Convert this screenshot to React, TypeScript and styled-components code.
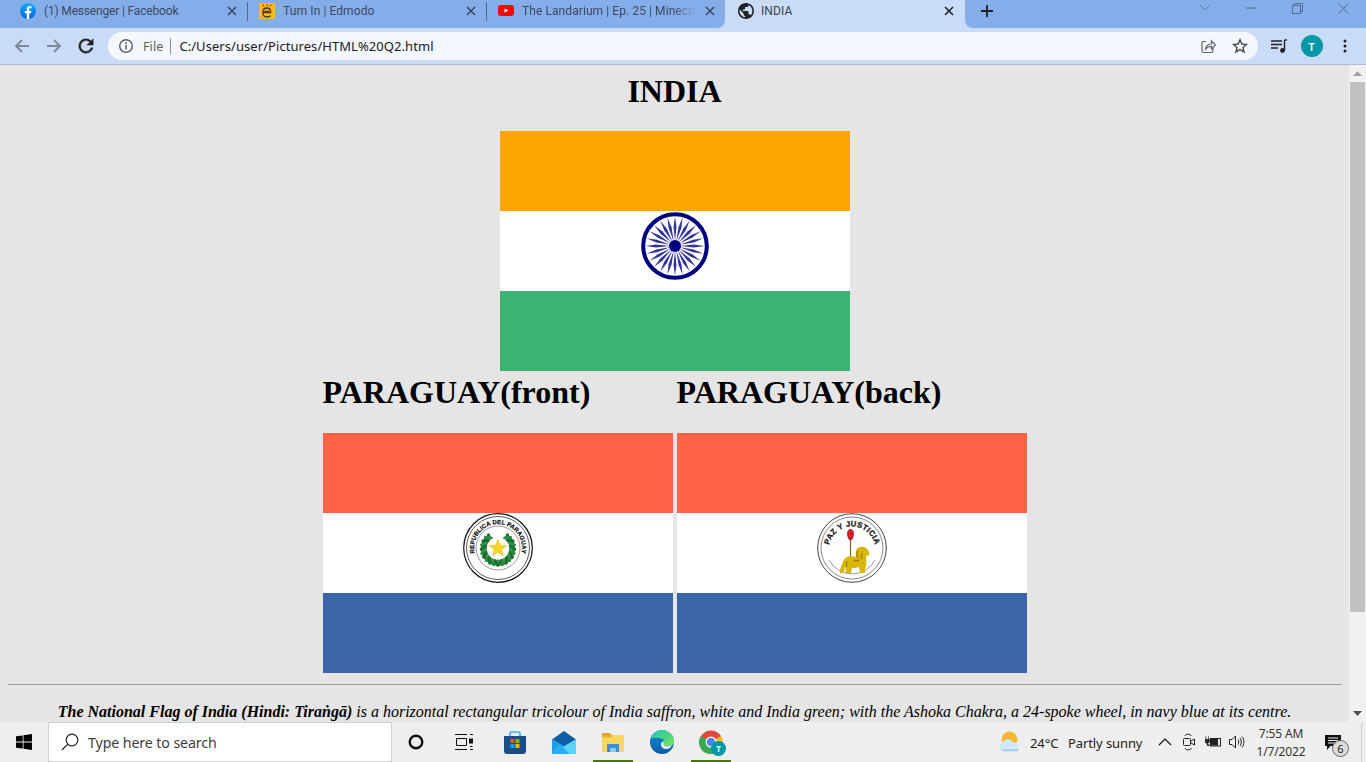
import React from "react";
import styled, { createGlobalStyle } from "styled-components";

const Global = createGlobalStyle`
  html, body { margin: 0; padding: 0; height: 100%; overflow: hidden; }
  #root { height: 100%; }
  * { box-sizing: border-box; }
`;

const UI = `"Noto Sans", "Open Sans", sans-serif`;
const SERIF = `"Liberation Serif", "Times New Roman", serif`;

const Screen = styled.div`
  width: 1366px; height: 762px; display: flex; flex-direction: column; overflow: hidden;
  font-family: ${UI};
`;

/* ---------- browser chrome ---------- */
const TabStrip = styled.div`
  height: 28px; display: flex; background: #c9dbf6; flex: none;
`;
const InactiveTabs = styled.div`
  width: 725px; padding-left: 8px; display: flex; background: #85ade9;
  border-bottom-right-radius: 8px;
`;
const Tab = styled.div<{ $active?: boolean; $sep?: boolean }>`
  width: ${p => (p.$active ? 240 : 239)}px; height: 22px; display: flex; align-items: center;
  padding-left: ${p => (p.$active ? 13 : 12)}px; gap: ${p => (p.$active ? 7 : 8)}px; position: relative; flex: none;
  &::after {
    content: ""; display: ${p => (p.$sep ? "block" : "none")};
    position: absolute; right: -1px; top: 2px; height: 19px; width: 1px; background: #4f6a92;
  }
`;
const TabTitle = styled.span<{ $fade?: boolean; $active?: boolean; $tight?: boolean }>`
  width: ${p => (p.$active ? 181 : 180)}px; font-family: Roboto, sans-serif; font-size: 12px; white-space: nowrap; overflow: hidden;
  letter-spacing: ${p => (p.$tight ? "-0.17px" : "0.08px")}; padding-bottom: 1px;
  color: ${p => (p.$active ? "#3a4150" : "#3c4a60")};
  ${p => p.$fade && "-webkit-mask-image: linear-gradient(to right, #000 84%, transparent 97%);"}
`;
const TabClose = styled.span`
  width: 12px; height: 12px; display: flex; align-items: center; justify-content: center; flex: none; margin-left: -6px;
`;
const RestStrip = styled.div`
  flex: 1; background: #85ade9; border-bottom-left-radius: 8px; display: flex; padding-left: 15px;
`;
const NewTab = styled.span`
  width: 14px; height: 22px; display: flex; align-items: center;
`;
const WindowControls = styled.div`
  margin-left: auto; display: flex; height: 16px;
`;
const WinBtn = styled.span`
  width: 46px; height: 16px; display: flex; align-items: center; justify-content: center;
`;
const Toolbar = styled.div`
  height: 37px; background: #c9dbf6; border-bottom: 1px solid #a9bbd8; display: flex; align-items: flex-start;
  padding: 4px 0 0 6px; flex: none;
`;
const ToolBtn = styled.span<{ $w?: number }>`
  width: ${p => p.$w ?? 32}px; height: 28px; display: flex; align-items: center; justify-content: center; flex: none;
`;
const Omnibox = styled.div`
  width: 1150px; height: 28px; margin: 0 4px 0 6px; border-radius: 14px; background: #f4f7fd;
  display: flex; align-items: center; padding: 0 2px 0 10px; flex: none;
`;
const FileLabel = styled.span`
  font-size: 12.5px; color: #5f6368; margin-left: 9px; letter-spacing: 0.1px;
`;
const OmniSep = styled.span`
  width: 1px; height: 16px; background: #8d9299; margin: 0 8px 0 7px;
`;
const Url = styled.span`
  font-size: 13px; color: #202124; letter-spacing: 0.06px; flex: 1;
`;
const Avatar = styled.span`
  width: 22px; height: 22px; border-radius: 50%; background: #0097a7; color: #e8f6f7;
  font-size: 11.5px; font-weight: 600; display: flex; align-items: center; justify-content: center;
`;

/* ---------- page ---------- */
const Viewport = styled.div`
  flex: 1; min-height: 0; display: flex;
`;
const Page = styled.main`
  flex: 1; min-width: 0; background: #e5e5e5; padding: 8px 8px 0; overflow: hidden;
  font-family: ${SERIF}; color: #000;
`;
const Title = styled.h1`
  margin: 0 0 21px; font-size: 32px; line-height: 37px; font-weight: 700; text-align: center;
`;
const CenterFlag = styled.div`
  display: flex; justify-content: center;
`;
const Flag = styled.div`
  width: 350px; height: 240px; display: grid; grid-template-rows: repeat(3, 80px);
`;
const Stripe = styled.div<{ $color: string }>`
  background: ${p => p.$color}; display: flex; justify-content: center; align-items: center; padding-bottom: 10px;
`;
const PairGrid = styled.div`
  width: 704px; margin: 3px auto 0; display: grid; grid-template-columns: 350px 350px; column-gap: 4px;
`;
const PairHeading = styled.h1`
  margin: 0 0 22px; font-size: 32px; line-height: 37px; font-weight: 700; white-space: nowrap;
`;
const Rule = styled.hr`
  margin: 11px -1px 0 0; border: 0; height: 1px; background: #9e9e9e;
`;
const Para = styled.p`
  margin: 18px 0 0; font-size: 16px; line-height: 18px; font-style: italic; text-align: center; white-space: nowrap;
`;
const Scrollbar = styled.div`
  width: 17px; flex: none; background: #f1f1f1; display: flex; flex-direction: column; align-items: center;
`;
const ScrollArrow = styled.span`
  height: 17px; display: flex; align-items: center; justify-content: center; flex: none;
`;
const ScrollThumb = styled.div`
  width: 15px; height: 530px; background: #c1c1c1; flex: none;
`;
const ScrollTrack = styled.div`
  flex: 1;
`;

/* ---------- taskbar ---------- */
const Taskbar = styled.footer`
  height: 40px; background: #eeeeee; display: flex; flex: none; align-items: stretch;
`;
const StartBtn = styled.span`
  width: 48px; display: flex; align-items: center; justify-content: center; flex: none;
`;
const SearchBox = styled.div`
  width: 344px; background: #fff; border: 1px solid #cfcfcf; display: flex; align-items: center; padding-left: 12px; gap: 9px; flex: none;
`;
const SearchText = styled.span`
  font-size: 14.2px; color: #3d3d3d; letter-spacing: -0.1px;
`;
const TaskBtn = styled.span<{ $w?: number; $open?: boolean }>`
  width: ${p => p.$w ?? 49}px; display: flex; align-items: center; justify-content: center; position: relative; flex: none;
  &::after {
    content: ""; display: ${p => (p.$open ? "block" : "none")};
    position: absolute; bottom: 0; left: 5px; right: 4px; height: 2px; background: #427a0d;
  }
`;
const TaskApps = styled.div`
  display: flex; margin-left: 2px;
`;
const Tray = styled.div`
  margin-left: auto; width: 369px; display: flex; align-items: center; font-size: 13px; color: #222; flex: none;
`;
const WeatherIcon = styled.span`
  width: 22px; height: 22px; margin: 0 9px 0 2px; flex: none;
`;
const TrayText = styled.span<{ $w: number }>`
  width: ${p => p.$w}px; white-space: nowrap; letter-spacing: -0.1px; flex: none; padding-top: 1px;
`;
const TrayIcon = styled.span`
  width: 24px; height: 40px; display: flex; align-items: center; justify-content: center; flex: none;
`;
const Clock = styled.div`
  width: 64px; display: flex; flex-direction: column; align-items: center; gap: 1px; font-size: 12px; line-height: 17px; color: #333; letter-spacing: -0.15px; flex: none;
`;
const Notify = styled.span`
  width: 40px; height: 40px; display: flex; align-items: center; justify-content: center; position: relative; flex: none;
`;
const NotifyBadge = styled.span`
  position: absolute; left: 19px; top: 18px; width: 17px; height: 17px; border-radius: 50%;
  background: #dcdcdc; border: 1px solid #666; font-size: 11px; line-height: 15px; text-align: center; color: #222;
`;
const ShowDesktop = styled.span`
  width: 1px; height: 40px; background: #d4d4d4; margin-left: 8px; flex: none;
`;
const ChromeBadge = styled.span`
  position: absolute; left: 25px; top: 19px; width: 15px; height: 15px; border-radius: 50%;
  background: #0097a7; color: #dff; font-size: 8px; font-weight: 700; line-height: 15px; text-align: center;
`;

/* ---------- drawings ---------- */
const Close = ({ c = "#3c4a60" }: { c?: string }) => (
  <svg width="10" height="10" viewBox="0 0 10 10"><path d="M1 1l8 8M9 1l-8 8" stroke={c} strokeWidth="1.6" /></svg>
);
const FbIcon = () => (
  <svg width="16" height="16" viewBox="0 0 16 16" style={{ flex: "none" }}>
    <defs><linearGradient id="fb" x1="0" y1="0" x2="0" y2="1"><stop offset="0" stopColor="#18acfe" /><stop offset="1" stopColor="#0163e0" /></linearGradient></defs>
    <circle cx="8" cy="8" r="8" fill="url(#fb)" />
    <path d="M11 10.200l.4-2.300H9.200V6.400c0-.7.3-1.200 1.200-1.200h1.100V3.200C11.100 3.100 10.500 3 9.900 3 8 3 6.800 4.100 6.800 6.100v1.800H4.800v2.300h2v5.700c.8.200 1.600.200 2.400 0v-5.700z" fill="#fff" />
  </svg>
);
const EdmodoIcon = () => (
  <svg width="16" height="16" viewBox="0 0 16 16" style={{ flex: "none" }}>
    <rect width="16" height="16" fill="#fbb81d" />
    <path d="M4 1.500l1 2M8 1v2M12 1.500l-1 2" stroke="#5a4410" strokeWidth="1" />
    <path d="M4 9.500h7.700c0-3-1.500-4.500-3.800-4.500S3.900 6.800 3.900 9.500s1.600 4.500 4 4.500c1.600 0 2.800-.5 3.500-1.300M5.500 8.300h4.500" fill="none" stroke="#4a3a10" strokeWidth="1.300" />
  </svg>
);
const YtIcon = () => (
  <svg width="16" height="16" viewBox="0 0 16 16" style={{ flex: "none" }}>
    <rect y="2" width="16" height="11" rx="3" fill="#f00" />
    <path d="M6.500 5.500l4 2-4 2z" fill="#fff" />
  </svg>
);
const Globe = () => (
  <svg width="16" height="16" viewBox="2 2 20 20" style={{ flex: "none" }}>
    <path fill="#202124" d="M12 2C6.480 2 2 6.480 2 12s4.480 10 10 10 10-4.480 10-10S17.520 2 12 2zm-1 17.930c-3.950-.490-7-3.850-7-7.930 0-.620.080-1.210.210-1.790L9 15v1c0 1.100.9 2 2 2v1.930zm6.900-2.540c-.260-.810-1-1.390-1.900-1.390h-1v-3c0-.550-.450-1-1-1H8v-2h2c.550 0 1-.450 1-1V7h2c1.100 0 2-.9 2-2v-.410c2.930 1.190 5 4.060 5 7.410 0 2.080-.8 3.970-2.100 5.390z" />
  </svg>
);
const Arrow = ({ flip }: { flip?: boolean }) => (
  <svg width="16" height="16" viewBox="0 0 16 16" style={flip ? { transform: "scaleX(-1)" } : undefined}>
    <path d="M15 8H2M8 2L2 8l6 6" fill="none" stroke="#7d8897" strokeWidth="1.900" />
  </svg>
);
const Reload = () => (
  <svg width="18" height="18" viewBox="2 2 20 20">
    <path fill="#202124" stroke="#202124" strokeWidth=".5" d="M17.650 6.350A7.958 7.958 0 0 0 12 4c-4.420 0-7.990 3.580-7.990 8s3.570 8 7.990 8c3.730 0 6.840-2.550 7.730-6h-2.080A5.990 5.990 0 0 1 12 18c-3.310 0-6-2.690-6-6s2.690-6 6-6c1.660 0 3.140.690 4.220 1.780L13 11h7V4l-2.350 2.350z" />
  </svg>
);
const Info = () => (
  <svg width="16" height="16" viewBox="0 0 16 16">
    <circle cx="8" cy="8" r="6.300" fill="none" stroke="#5a5e63" strokeWidth="1.400" />
    <path d="M8 7v4.500" stroke="#5a5e63" strokeWidth="1.500" /><circle cx="8" cy="5" r=".9" fill="#5a5e63" />
  </svg>
);
const Share = () => (
  <svg width="16" height="16" viewBox="0 0 16 16" fill="none" stroke="#5f6368" strokeWidth="1.200">
    <path d="M13 10v3a1.500 1.500 0 0 1-1.500 1.500h-8A1.500 1.500 0 0 1 2 13V5a1.500 1.500 0 0 1 1.500-1.500H6" />
    <path d="M5.500 11c.5-3 2.500-5 6-5V3l4 4-4 4V8.300c-2.500 0-4.500 1-6 2.700z" />
  </svg>
);
const Star = () => (
  <svg width="16" height="16" viewBox="0 0 16 16">
    <path d="M8 1.800l1.900 4.200 4.500.5-3.400 3 1 4.500L8 11.700l-4 2.300 1-4.500-3.400-3 4.500-.5z" fill="none" stroke="#4a4d52" strokeWidth="1.500" />
  </svg>
);
const Queue = () => (
  <svg width="16" height="16" viewBox="0 0 16 16">
    <path d="M0 3h11M0 6.500h11M0 10h7" stroke="#202124" strokeWidth="1.400" />
    <path d="M13.500 2v10.500" stroke="#202124" strokeWidth="1.400" /><path d="M13.500 2H16" stroke="#202124" strokeWidth="1.400" />
    <circle cx="11.500" cy="12.500" r="2.400" fill="#202124" />
  </svg>
);
const Dots = () => (
  <svg width="4" height="14" viewBox="0 0 4 14" fill="#202124"><circle cx="2" cy="2" r="1.500" /><circle cx="2" cy="7" r="1.500" /><circle cx="2" cy="12" r="1.500" /></svg>
);
const WinChevron = () => <svg width="12" height="8" viewBox="0 0 12 8"><path d="M1 1l5 5 5-5" fill="none" stroke="#5c7aa6" strokeWidth="1" /></svg>;
const WinMin = () => <svg width="10" height="2" viewBox="0 0 10 2"><path d="M0 1h10" stroke="#4f6c98" strokeWidth="1" /></svg>;
const WinMax = () => (
  <svg width="11" height="11" viewBox="0 0 11 11" fill="none" stroke="#4f6c98" strokeWidth="1">
    <rect x=".5" y="2.500" width="8" height="8" /><path d="M2.500 2.500V.5h8v8h-2" />
  </svg>
);
const WinClose = () => <svg width="11" height="11" viewBox="0 0 11 11"><path d="M.5.5l10 10M10.500.5l-10 10" stroke="#4f6c98" strokeWidth="1" /></svg>;
const Triangle = ({ down }: { down?: boolean }) => (
  <svg width="9" height="5" viewBox="0 0 9 5"><path d={down ? "M0 0h9L4.500 5z" : "M0 5h9L4.500 0z"} fill={down ? "#505050" : "#a3a3a3"} /></svg>
);

const Chakra = () => (
  <svg width="68" height="68" viewBox="0 0 68 68">
    <circle cx="34" cy="34" r="31.800" fill="#fff" stroke="#000080" strokeWidth="4" />
    {Array.from({ length: 24 }, (_, i) => (
      <path key={i} d="M34 29L32.500 15 34 4.500 35.500 15z" fill="#000080" opacity=".8" transform={`rotate(${i * 15} 34 34)`} />
    ))}
    <circle cx="34" cy="34" r="6" fill="#000080" />
  </svg>
);

const leaves = (side: 1 | -1) =>
  Array.from({ length: 10 }, (_, i) => {
    const deg = 172 - i * 14.5;
    const a = (deg * Math.PI) / 180;
    const x = 35 + side * 14.5 * Math.sin(a);
    const y = 35.5 - 14.5 * Math.cos(a);
    return (
      <g key={i}>
        <ellipse cx={x} cy={y} rx="4.500" ry="1.900" fill={i % 2 ? "#1c6f2e" : "#3a9a50"} transform={`rotate(${side * (deg + 45)} ${x} ${y})`} />
        <ellipse cx={x} cy={y} rx="4.500" ry="1.700" fill={i % 2 ? "#2c8a42" : "#1c6f2e"} transform={`rotate(${side * (deg - 45)} ${x} ${y})`} />
      </g>
    );
  });

const EmblemFront = () => (
  <svg width="70" height="70" viewBox="0 0 70 70">
    <circle cx="35" cy="35" r="34.300" fill="#fff" stroke="#111" strokeWidth="1.200" />
    <circle cx="35" cy="35" r="31.500" fill="none" stroke="#333" strokeWidth=".8" />
    <circle cx="35" cy="35" r="22" fill="none" stroke="#555" strokeWidth=".6" />
    <defs><path id="frontArc" d="M 11.800 41.200 A 24 24 0 1 1 58.200 41.200" /></defs>
    <text fontFamily='"Liberation Sans", sans-serif' fontSize="6" fontWeight="700" fill="#111" stroke="#111" strokeWidth=".25" letterSpacing=".1">
      <textPath href="#frontArc" startOffset="50%" textAnchor="middle">REPUBLICA DEL PARAGUAY</textPath>
    </text>
    {leaves(1)}
    {leaves(-1)}
    <path d="M35 26l2.500 6 6.500.4-5 4.200 1.600 6.300-5.600-3.400-5.600 3.400 1.600-6.300-5-4.200 6.500-.4z" fill="#f7d42a" stroke="#c9a91c" strokeWidth=".3" />
  </svg>
);

const EmblemBack = () => (
  <svg width="70" height="70" viewBox="0 0 70 70">
    <circle cx="35" cy="35" r="34.300" fill="#fff" stroke="#444" strokeWidth="1" />
    <circle cx="35" cy="35" r="31" fill="none" stroke="#888" strokeWidth="1" />
    <path d="M12 47a26 26 0 0 0 46 0" fill="none" stroke="#999" strokeWidth="1" />
    <defs><path id="backArc" d="M 11.500 37 A 23.500 23.500 0 1 1 58.500 37" /></defs>
    <text fontFamily='"Liberation Sans", sans-serif' fontSize="7.800" fontWeight="700" fill="#222" stroke="#222" strokeWidth=".3" letterSpacing=".25">
      <textPath href="#backArc" startOffset="50%" textAnchor="middle">PAZ Y JUSTICIA</textPath>
    </text>
    <path d="M33.500 26v18" stroke="#7a6a20" strokeWidth="1.200" />
    <path d="M30 20.500c0-2.500 1.700-4.500 3.500-4.500s3.500 2 3.500 4.500-1.300 7-3.500 7-3.500-4.500-3.500-7z" fill="#d01f2c" />
    <path d="M23 60c-1-3 1-6 2-9 1-4 4-8 9-8 2 0 4 1 5 1 0-3-1-5 1-8 2-3 8-3 10 0 2 2 3 4 2 6-1 1-3 0-3 2 0 3 1 6 0 9-1 2-1 5-1 7h-5l-1-6c-2 1-5 1-7 1l-1 5h-5c-1-2 0-4 0-6-1 1-2 3-2 6z" fill="#d9b60c" />
    <path d="M41 38c-1.500 2-1.500 5 .5 7M45 40c-1 2-1 4 0 6M30 48c-1 2-1 4 0 6M37 47c1 1 3 1 5 0" fill="none" stroke="#94790a" strokeWidth="1.100" />
  </svg>
);

const WinLogo = () => (
  <svg width="16" height="16" viewBox="0 0 16 16" fill="#000">
    <path d="M0 2.300l6.700-.9v6.200H0zM7.500 1.300L16 0v7.600H7.500zM0 8.400h6.700v6.200L0 13.700zM7.500 8.400H16V16l-8.500-1.200z" />
  </svg>
);
const SearchIcon = () => (
  <svg width="18" height="18" viewBox="0 0 18 18" fill="none" stroke="#222" strokeWidth="1.200">
    <circle cx="11" cy="7" r="5.800" /><path d="M6.800 11.200L1 17" />
  </svg>
);
const Cortana = () => <svg width="16" height="16" viewBox="0 0 16 16"><circle cx="8" cy="8" r="6.300" fill="none" stroke="#111" strokeWidth="2.400" /></svg>;
const TaskView = () => (
  <svg width="18" height="16" viewBox="0 0 18 16" fill="none" stroke="#111" strokeWidth="1">
    <path d="M0 .5h12M0 15.500h12M1.500 4.500h10v7h-10zM15 .5h3M15 15.500h3" />
    <rect x="14.500" y="5" width="3" height="4" fill="#111" />
    <path d="M15 12.500h2.500" />
  </svg>
);
const Store = () => (
  <svg width="24" height="24" viewBox="0 0 24 24">
    <path d="M7 6V3.500A1.500 1.500 0 0 1 8.500 2h7A1.500 1.500 0 0 1 17 3.500V6" fill="none" stroke="#2bb6f0" strokeWidth="1.700" />
    <path d="M1 6h22v15a3 3 0 0 1-3 3H4a3 3 0 0 1-3-3z" fill="#1a4c85" />
    <rect x="7.500" y="9" width="4" height="4" fill="#f25022" /><rect x="12.500" y="9" width="4" height="4" fill="#7fba00" />
    <rect x="7.500" y="14" width="4" height="4" fill="#00a4ef" /><rect x="12.500" y="14" width="4" height="4" fill="#ffb900" />
  </svg>
);
const Mail = () => (
  <svg width="24" height="23" viewBox="0 0 24 23">
    <path d="M0 8.500L12 0l12 8.500-12 7z" fill="#0f5fa6" />
    <path d="M0 8.500v14.500h16L12 15z" fill="#1f9ee8" />
    <path d="M24 8.500V23H6L12 15.500z" fill="#58d4f8" />
    <path d="M0 23h18L7 13z" fill="#2aaef0" />
  </svg>
);
const Explorer = () => (
  <svg width="22" height="20" viewBox="0 0 22 20">
    <path d="M0 2a1 1 0 0 1 1-1h7l2 2.500H0z" fill="#dba321" />
    <rect y="3" width="22" height="17" rx="1" fill="#f9d65c" />
    <rect y="3" width="10" height="2.500" fill="#e8b22a" />
    <path d="M5 20v-7a1 1 0 0 1 1-1h10a1 1 0 0 1 1 1v7h-3.500v-4h-5v4z" fill="#3c8fd6" />
    <rect x="8.500" y="16" width="5" height="4" fill="#8fcdf0" />
  </svg>
);
const Edge = () => (
  <svg width="24" height="24" viewBox="0 0 24 24">
    <defs>
      <linearGradient id="edg" x1="0" y1="0" x2="1" y2="1"><stop offset="0" stopColor="#2bc6c0" /><stop offset=".6" stopColor="#4fd87a" /><stop offset="1" stopColor="#8ee25d" /></linearGradient>
      <linearGradient id="edb" x1="0" y1="0" x2="0" y2="1"><stop offset="0" stopColor="#1590dc" /><stop offset="1" stopColor="#0a5aa8" /></linearGradient>
    </defs>
    <circle cx="12" cy="12" r="12" fill="url(#edb)" />
    <path d="M1 8C3 2.500 8 0 12 0c7 0 12 5 12 11.500 0 3-2.500 5-6 5-2.500 0-4.500-.8-4.500-2.500 0-.7.5-1 .8-1.600.3-1.400-.8-4-4.300-4.400C6 7.500 3 7.500 1 8z" fill="url(#edg)" />
    <path d="M13.500 14c0 1.700 2 2.500 4.500 2.500 1.500 0 2.700-.4 3.700-1-.8 2-2.800 3.500-5.700 3.500-3 0-5-2-5-4.500 0-1.800 1.500-3.200 3-3.500-.4.900-.5 2-.5 3z" fill="#eef8fc" />
  </svg>
);
const ChromeMark = () => (
  <svg width="24" height="24" viewBox="0 0 24 24">
    <circle cx="12" cy="12" r="11.500" fill="#e1493a" />
    <path d="M12 12L22 6a11.500 11.500 0 0 1-4 16z" fill="#f6c026" />
    <path d="M12 12L18 22A11.500 11.500 0 0 1 2 6z" fill="#3ba855" />
    <circle cx="12" cy="12" r="5.500" fill="#fff" /><circle cx="12" cy="12" r="4.300" fill="#4a86e8" />
  </svg>
);
const Weather = () => (
  <svg width="22" height="22" viewBox="0 0 24 24">
    <circle cx="11.500" cy="9" r="8.500" fill="#f8b733" />
    <path d="M5 22a4.500 4.500 0 0 1-1-8.800A6 6 0 0 1 15 12a4.500 4.500 0 0 1 4.500 4 3.200 3.200 0 0 1 .5 6z" fill="#cfe8fa" />
    <path d="M5 22a4.500 4.500 0 0 1-2-2h18a3 3 0 0 1-1 2z" fill="#9fcdf0" />
  </svg>
);
const Chevron = () => <svg width="14" height="8" viewBox="0 0 14 8"><path d="M1 7l6-6 6 6" fill="none" stroke="#111" strokeWidth="1.200" /></svg>;
const Meet = () => (
  <svg width="12" height="18" viewBox="0 0 12 18" fill="none" stroke="#222" strokeWidth="1">
    <rect x=".5" y="5.500" width="7" height="7" rx="1" /><path d="M8 8l3.500-2v6L8 10" />
    <path d="M2 3c1-2.500 5-2.500 6.500 0M2 15c1 2.500 5 2.500 6.500 0" />
  </svg>
);
const Battery = () => (
  <svg width="16" height="12" viewBox="0 0 16 12">
    <path d="M1 .5v3M3.500.5v3M0 3.500h4.500V5a2 2 0 0 1-4.500 0zM2.200 7v2.500H5" fill="#222" stroke="#222" strokeWidth=".8" />
    <rect x="5.500" y="2.500" width="10" height="7.500" fill="none" stroke="#222" />
    <rect x="5.500" y="3" width="7.500" height="6.500" fill="#222" />
  </svg>
);
const Speaker = () => (
  <svg width="16" height="14" viewBox="0 0 16 14" fill="none" stroke="#222" strokeWidth="1">
    <path d="M.5 4.500h2.500L6.500 1v12L3 9.500H.5z" />
    <path d="M9 4.500c1 1.500 1 3.500 0 5M11 3c1.700 2.200 1.700 5.800 0 8M13 1.500c2.500 3 2.500 8 0 11" />
  </svg>
);
const NotifyIcon = () => (
  <svg width="16" height="15" viewBox="0 0 16 15"><path d="M0 0h16v11H5.500L2 15v-4H0z" fill="#111" /><path d="M3 3h10M3 5.500h10M3 8h7" stroke="#eee" strokeWidth="1" /></svg>
);

const tabs = [
  { title: "(1) Messenger | Facebook", icon: <FbIcon />, tight: true },
  { title: "Turn In | Edmodo", icon: <EdmodoIcon /> },
  { title: "The Landarium | Ep. 25 | Minecraft", icon: <YtIcon />, fade: true },
];

const PARAGUAY = ["#ff6347", "#ffffff", "#3a65a8"];

const ParaguayFlag = ({ emblem }: { emblem: React.ReactNode }) => (
  <Flag>
    <Stripe $color={PARAGUAY[0]} />
    <Stripe $color={PARAGUAY[1]}>{emblem}</Stripe>
    <Stripe $color={PARAGUAY[2]} />
  </Flag>
);

export default function App() {
  return (
    <Screen>
      <Global />
      <TabStrip>
        <InactiveTabs>
          {tabs.map((t, i) => (
            <Tab key={t.title} $sep={i < 2}>
              {t.icon}
              <TabTitle $fade={t.fade} $tight={t.tight}>{t.title}</TabTitle>
              <TabClose><Close /></TabClose>
            </Tab>
          ))}
        </InactiveTabs>
        <Tab $active>
          <Globe />
          <TabTitle $active>INDIA</TabTitle>
          <TabClose><Close c="#202124" /></TabClose>
        </Tab>
        <RestStrip>
          <NewTab>
            <svg width="14" height="14" viewBox="0 0 14 14"><path d="M7 1v12M1 7h12" stroke="#202124" strokeWidth="1.800" /></svg>
          </NewTab>
          <WindowControls>
            <WinBtn><WinChevron /></WinBtn>
            <WinBtn><WinMin /></WinBtn>
            <WinBtn><WinMax /></WinBtn>
            <WinBtn><WinClose /></WinBtn>
          </WindowControls>
        </RestStrip>
      </TabStrip>

      <Toolbar>
        <ToolBtn><Arrow /></ToolBtn>
        <ToolBtn><Arrow flip /></ToolBtn>
        <ToolBtn><Reload /></ToolBtn>
        <Omnibox>
          <Info />
          <FileLabel>File</FileLabel>
          <OmniSep />
          <Url>C:/Users/user/Pictures/HTML%20Q2.html</Url>
          <ToolBtn><Share /></ToolBtn>
          <ToolBtn><Star /></ToolBtn>
        </Omnibox>
        <ToolBtn $w={33}><Queue /></ToolBtn>
        <ToolBtn $w={33}><Avatar>T</Avatar></ToolBtn>
        <ToolBtn $w={33}><Dots /></ToolBtn>
      </Toolbar>

      <Viewport>
        <Page>
          <Title>INDIA</Title>
          <CenterFlag>
            <Flag>
              <Stripe $color="#ffa500" />
              <Stripe $color="#ffffff"><Chakra /></Stripe>
              <Stripe $color="#3cb371" />
            </Flag>
          </CenterFlag>
          <PairGrid>
            <PairHeading>PARAGUAY(front)</PairHeading>
            <PairHeading>PARAGUAY(back)</PairHeading>
            <ParaguayFlag emblem={<EmblemFront />} />
            <ParaguayFlag emblem={<EmblemBack />} />
          </PairGrid>
          <Rule />
          <Para>
            <b>The National Flag of India (Hindi: Tiraṅgā)</b> is a horizontal rectangular tricolour of India saffron, white and India green; with the Ashoka Chakra, a 24-spoke wheel, in navy blue at its centre.
          </Para>
        </Page>
        <Scrollbar>
          <ScrollArrow><Triangle /></ScrollArrow>
          <ScrollThumb />
          <ScrollTrack />
          <ScrollArrow><Triangle down /></ScrollArrow>
        </Scrollbar>
      </Viewport>

      <Taskbar>
        <StartBtn><WinLogo /></StartBtn>
        <SearchBox>
          <SearchIcon />
          <SearchText>Type here to search</SearchText>
        </SearchBox>
        <TaskBtn $w={48}><Cortana /></TaskBtn>
        <TaskBtn $w={48}><TaskView /></TaskBtn>
        <TaskApps>
          <TaskBtn><Store /></TaskBtn>
          <TaskBtn><Mail /></TaskBtn>
          <TaskBtn $open><Explorer /></TaskBtn>
          <TaskBtn><Edge /></TaskBtn>
          <TaskBtn $open><ChromeMark /><ChromeBadge>T</ChromeBadge></TaskBtn>
        </TaskApps>
        <Tray>
          <WeatherIcon><Weather /></WeatherIcon>
          <TrayText $w={38}>24°C</TrayText>
          <TrayText $w={85}>Partly sunny</TrayText>
          <TrayIcon><Chevron /></TrayIcon>
          <TrayIcon><Meet /></TrayIcon>
          <TrayIcon><Battery /></TrayIcon>
          <TrayIcon><Speaker /></TrayIcon>
          <Clock><span>7:55 AM</span><span>1/7/2022</span></Clock>
          <Notify><NotifyIcon /><NotifyBadge>6</NotifyBadge></Notify>
          <ShowDesktop />
        </Tray>
      </Taskbar>
    </Screen>
  );
}
